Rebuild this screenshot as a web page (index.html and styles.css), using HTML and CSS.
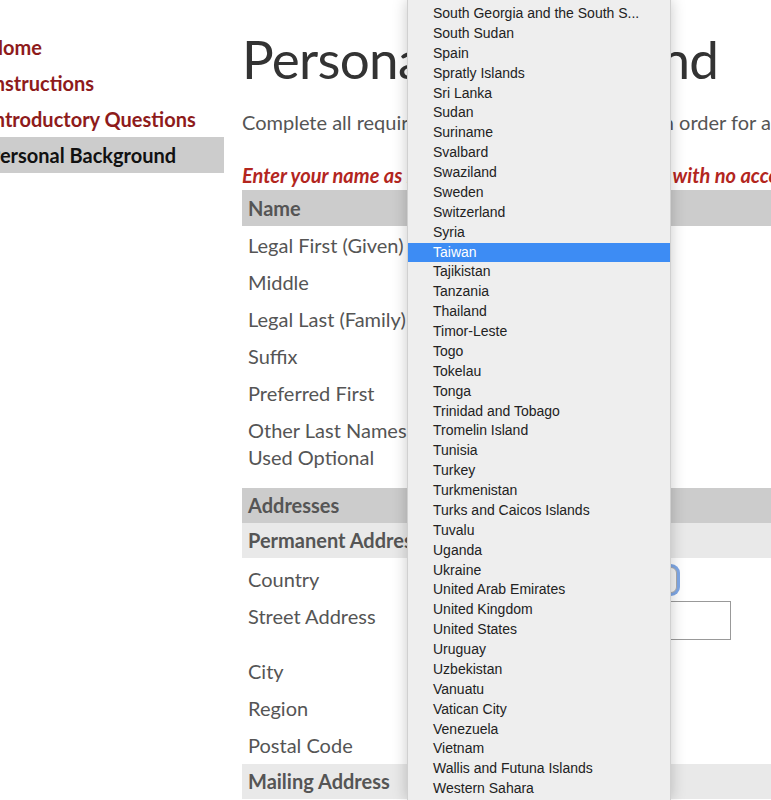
FILE: index.html
```html
<!DOCTYPE html>
<html>
<head>
<meta charset="utf-8">
<title>Personal Background</title>
<link rel="stylesheet" href="styles.css">
</head>
<body>
<div class="page">
  <nav class="nav">
    <a class="nav-item">Home</a>
    <a class="nav-item">Instructions</a>
    <a class="nav-item">Introductory Questions</a>
    <a class="nav-item active">Personal Background</a>
  </nav>
  <main class="main">
    <h1 class="title">Personal Background</h1>
    <p class="intro">Complete all required fields on this screen here in order for a complete application.</p>
    <p class="warn">Enter your name as it appears on your US passport, with no accents or special characters.</p>

    <div class="bar">Name</div>
    <div class="row first"><span class="label">Legal First (Given)</span><span class="field"></span></div>
    <div class="row"><span class="label">Middle</span><span class="field"></span></div>
    <div class="row"><span class="label">Legal Last (Family)</span><span class="field"></span></div>
    <div class="row"><span class="label">Suffix</span><span class="field"></span></div>
    <div class="row"><span class="label">Preferred First</span><span class="field"></span></div>
    <div class="row two"><span class="label">Other Last Names<br>Used Optional</span><span class="field"></span></div>

    <div class="bar">Addresses</div>
    <div class="bar sub">Permanent Address</div>
    <div class="row country"><span class="label">Country</span><span class="select"></span></div>
    <div class="row street"><span class="label">Street Address</span><span class="input"></span></div>
    <div class="row"><span class="label">City</span><span class="field"></span></div>
    <div class="row"><span class="label">Region</span><span class="field"></span></div>
    <div class="row"><span class="label">Postal Code</span><span class="field"></span></div>
    <div class="bar sub">Mailing Address</div>
  </main>
</div>

<ul class="dropdown">
  <li>South Georgia and the South S...</li>
  <li>South Sudan</li>
  <li>Spain</li>
  <li>Spratly Islands</li>
  <li>Sri Lanka</li>
  <li>Sudan</li>
  <li>Suriname</li>
  <li>Svalbard</li>
  <li>Swaziland</li>
  <li>Sweden</li>
  <li>Switzerland</li>
  <li>Syria</li>
  <li class="sel">Taiwan</li>
  <li>Tajikistan</li>
  <li>Tanzania</li>
  <li>Thailand</li>
  <li>Timor-Leste</li>
  <li>Togo</li>
  <li>Tokelau</li>
  <li>Tonga</li>
  <li>Trinidad and Tobago</li>
  <li>Tromelin Island</li>
  <li>Tunisia</li>
  <li>Turkey</li>
  <li>Turkmenistan</li>
  <li>Turks and Caicos Islands</li>
  <li>Tuvalu</li>
  <li>Uganda</li>
  <li>Ukraine</li>
  <li>United Arab Emirates</li>
  <li>United Kingdom</li>
  <li>United States</li>
  <li>Uruguay</li>
  <li>Uzbekistan</li>
  <li>Vanuatu</li>
  <li>Vatican City</li>
  <li>Venezuela</li>
  <li>Vietnam</li>
  <li>Wallis and Futuna Islands</li>
  <li>Western Sahara</li>
</ul>
</body>
</html>
```

FILE: styles.css
```css
html, body {
  margin: 0;
  padding: 0;
  background: #fff;
  overflow: hidden;
  height: 800px;
}
body {
  font-family: Lato, "Open Sans", sans-serif;
  color: #555;
}
.page {
  display: flex;
  width: 771px;
  overflow: hidden;
}
.nav {
  flex: 0 0 242px;
  margin-left: -18px;
  padding-top: 29px;
  display: flex;
  flex-direction: column;
}
.nav-item {
  display: block;
  height: 36px;
  line-height: 36px;
  padding-left: 6px;
  font-size: 20px;
  font-weight: 700;
  color: #8e1b1b;
  white-space: nowrap;
}
.nav-item.active {
  background: #cccccc;
  color: #111;
}
.main {
  flex: 1 0 560px;
  margin-left: 18px;
  padding-top: 26px;
}
.title {
  margin: 0;
  font-size: 53px;
  font-weight: 400;
  letter-spacing: -0.7px;
  line-height: 65px;
  color: #333;
  white-space: nowrap;
}
.intro {
  margin: 17px 0 0;
  font-size: 20px;
  line-height: 28px;
  color: #555;
  white-space: nowrap;
}
.warn {
  margin: 25px 0 0;
  font-size: 20px;
  line-height: 28px;
  font-weight: 700;
  font-style: italic;
  color: #b3261e;
  white-space: nowrap;
}
.bar {
  height: 35px;
  line-height: 35px;
  padding-left: 6px;
  background: #cccccc;
  font-size: 20px;
  font-weight: 700;
  color: #555;
  white-space: nowrap;
}
.warn + .bar { margin-top: 1px; height: 36px; line-height: 36px; }
.bar.sub { background: #e9e9e9; }
.row {
  display: grid;
  grid-template-columns: 172px 1fr;
  padding-left: 6px;
  min-height: 37px;
  font-size: 20px;
  color: #555;
}
.row.first { margin-top: 1px; }
.label {
  line-height: 37px;
  white-space: nowrap;
}
.row.two { padding: 5px 0 5px 6px; margin-bottom: 12px; }
.row.two .label { line-height: 27px; }
.row.country { margin-top: 3px; }
.select {
  align-self: center;
  width: 255px;
  height: 24px;
  border: 1px solid #aaa;
  border-radius: 6px;
  box-shadow: 0 0 0 3px #7fa8e6;
  background: #f4f4f4;
}
.row.street { min-height: 55px; }
.input {
  margin-top: 3px;
  width: 309px;
  height: 37px;
  border: 1px solid #999;
  background: #fff;
}
.dropdown {
  position: absolute;
  left: 407px;
  top: 0;
  width: 264px;
  height: 800px;
  margin: 0;
  padding: 4px 0 0;
  list-style: none;
  background: #eeeeee;
  border-left: 1px solid #d0d0d0;
  border-right: 1px solid #d0d0d0;
  box-sizing: border-box;
  box-shadow: 0 0 14px rgba(0,0,0,0.22);
  font-family: "Liberation Sans", Arial, sans-serif;
  font-size: 14px;
  color: #222;
}
.dropdown li {
  height: 19.875px;
  line-height: 19.875px;
  padding-left: 25px;
  white-space: nowrap;
}
.dropdown li.sel {
  background: #3d8cf4;
  color: #fff;
}
```
